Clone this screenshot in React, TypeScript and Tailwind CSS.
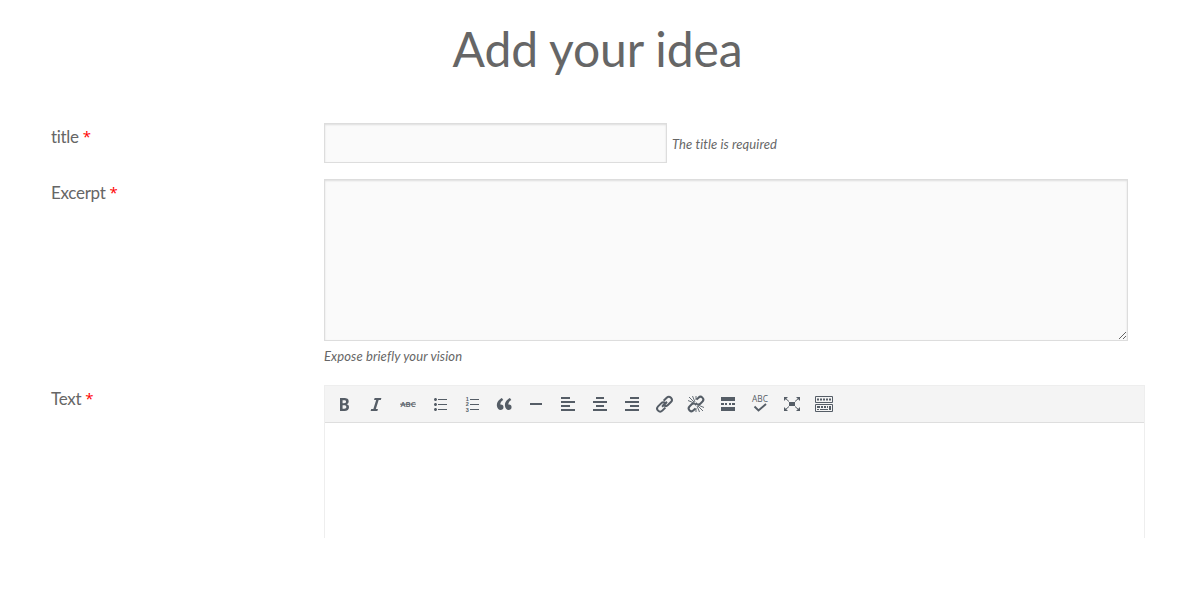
import React from "react";

const paths: Record<string, string> = {
  bold: "M6 4v13h4.54c1.37 0 2.46-.33 3.26-1 .8-.66 1.2-1.58 1.2-2.77 0-.84-.17-1.51-.51-2.01s-.9-.85-1.67-1.03v-.09c.57-.1 1.02-.4 1.36-.9s.51-1.13.51-1.91c0-1.14-.39-1.98-1.17-2.5C12.75 4.26 11.5 4 9.78 4H6zm2.57 5.15V6.26h1.36c.73 0 1.27.11 1.61.32.34.22.51.58.51 1.07 0 .54-.16.92-.47 1.15s-.82.35-1.51.35h-1.5zm0 2.19h1.6c1.44 0 2.16.53 2.16 1.61 0 .6-.17 1.05-.51 1.34s-.86.43-1.57.43H8.57v-3.38z",
  italic: "M14.78 6h-2.13l-2.8 9h2.12l-.62 2H4.6l.62-2h2.14l2.8-9H8.03l.62-2h6.75z",
  ul: "M5.5 7C4.67 7 4 6.33 4 5.5 4 4.68 4.67 4 5.5 4 6.32 4 7 4.68 7 5.5 7 6.33 6.32 7 5.5 7zM8 5h9v1H8V5zm-2.5 7c-.83 0-1.5-.67-1.5-1.5C4 9.68 4.67 9 5.5 9c.82 0 1.5.68 1.5 1.5 0 .83-.68 1.5-1.5 1.5zM8 10h9v1H8v-1zm-2.5 7c-.83 0-1.5-.67-1.5-1.5 0-.82.67-1.5 1.5-1.5.82 0 1.5.68 1.5 1.5 0 .83-.68 1.5-1.5 1.5zM8 15h9v1H8v-1z",
  quote: "M9.49 13.22c0-.74-.2-1.38-.61-1.9-.62-.78-1.83-.88-2.53-.72-.29-1.65 1.11-3.75 2.92-4.65L7.88 4c-2.73 1.3-5.42 4.28-4.96 8.05C3.21 14.43 4.59 16 6.54 16c.85 0 1.56-.25 2.12-.75s.83-1.18.83-2.03zm8.05 0c0-.74-.2-1.38-.61-1.9-.63-.78-1.83-.88-2.53-.72-.29-1.65 1.11-3.75 2.92-4.65L15.93 4c-2.73 1.3-5.41 4.28-4.95 8.05.29 2.38 1.66 3.95 3.61 3.95.85 0 1.56-.25 2.12-.75s.83-1.18.83-2.03z",
  rule: "M4 9h12v2H4z",
  left: "M3 3h9v2H3zM3 7h14v2H3zM3 11h9v2H3zM3 15h14v2H3z",
  center: "M6 3h8v2H6zM3 7h14v2H3zM6 11h8v2H6zM3 15h14v2H3z",
  right: "M8 3h9v2H8zM3 7h14v2H3zM8 11h9v2H8zM3 15h14v2H3z",
  more: "M3 3h14v4H3zM3 9h3v2H3zM7 9h2v2H7zM11 9h2v2h-2zM14 9h3v2h-3zM3 13h14v4H3z",
};

const Svg = ({ children }: { children: React.ReactNode }) => (
  <svg viewBox="0 0 20 20" className="size-5 shrink-0 fill-current">{children}</svg>
);
const P = ({ n }: { n: string }) => <Svg><path d={paths[n]} /></Svg>;

const links = (
  <g transform="translate(.5 .2) rotate(-45 10 10)" fill="none" stroke="currentColor" strokeWidth="2">
    <path d="M8.200 13H3.900a3 3 0 0 1 0-6h4.300a3 3 0 0 1 3 3H6.500" />
    <path d="M11.800 7h4.300a3 3 0 0 1 0 6h-4.300a3 3 0 0 1-3-3h4.700" />
  </g>
);

function Toolbar() {
  return (
    <div className="flex h-[37px] items-center gap-3 border-b border-[#dedede] bg-[#f4f4f4] px-[9px] text-[#555d66]">
      <P n="bold" />
      <P n="italic" />
      <Svg>
        <text x="2.500" y="12.800" textLength="15" lengthAdjust="spacingAndGlyphs" className="font-['Open_Sans',sans-serif] text-[7.5px] font-semibold">ABC</text>
        <path d="M2 9.700h16v.9H2z" />
      </Svg>
      <P n="ul" />
      <Svg>
        <path d="M8 5h9v1H8zM8 10h9v1H8zM8 15h9v1H8z" />
        <g className="font-['Liberation_Sans',sans-serif] text-[5.5px] font-bold">
          <text x="3.800" y="7">1</text><text x="3.800" y="12.300">2</text><text x="3.800" y="17.600">3</text>
        </g>
      </Svg>
      <P n="quote" />
      <P n="rule" />
      <P n="left" />
      <P n="center" />
      <P n="right" />
      <Svg>{links}</Svg>
      <Svg>
        <g fill="none" stroke="currentColor" strokeWidth="2">
          <path d="M10.500 5.500l2-1.800a2.700 2.700 0 0 1 4 3.800l-2.200 2.200c-.8.8-2 .9-3 .4M9.500 14.500l-2 1.800a2.700 2.700 0 0 1-4-3.800l2.200-2.200c.8-.8 2-.9 3-.4M9 11l2-2" />
        </g>
        <path d="M3 3l5.500 5.500M6.500 2l2.500 6M2 6.500l6 2.500M11.500 11.500L17 17M11 12l2.500 6M12 11l6 2.500M10 2v4M10 14v4" stroke="currentColor" strokeWidth=".9" />
      </Svg>
      <P n="more" />
      <Svg>
        <text x="2" y="8" textLength="16" lengthAdjust="spacingAndGlyphs" className="font-['Open_Sans',sans-serif] text-[8.5px] font-medium">ABC</text>
        <path d="M4.500 12.500l4 4 7.500-6.500" fill="none" stroke="currentColor" strokeWidth="1.900" />
      </Svg>
      <Svg>
        <path d="M7 8h6v4H7zM2 3h4L2 7zM14 3h4v4zM2 13v4h4zM18 13v4h-4z" />
        <path d="M3 4l4 3.500M17 4l-4 3.500M3 16l4-3.500M17 16l-4-3.500" stroke="currentColor" />
      </Svg>
      <Svg>
        <path d="M1.500 2.500h17v6h-17zM1.500 10.500h17v7h-17z" fill="none" stroke="currentColor" />
        <path d="M3 4.500h2v2H3zM6 4.500h2v2H6zM9 4.500h2v2H9zM12 4.500h2v2h-2zM15 4.500h2v2h-2zM3 12h3v2H3zM7 12h2v2H7zM10 12h2v2h-2zM13 12h1v2h-1zM15 12h2v4h-2zM3 15h2v1H3zM6 15h8v1H6z" />
      </Svg>
    </div>
  );
}

const Label = ({ text }: { text: string }) => (
  <label className="flex h-7 w-[273px] shrink-0 gap-[4px] pt-[2px] text-[17px] leading-6 tracking-[-0.3px]">
    <span>{text}</span>
    <span className="-mt-px font-['Open_Sans',sans-serif] text-[15px] text-[#ff0000]">*</span>
  </label>
);

export default function App() {
  return (
    <main className="h-[601px] overflow-hidden bg-white pl-[51px] font-['Lato',sans-serif] text-[#666]">
      <h1 className="h-[123px] w-[1093px] pt-[20px] text-center text-[48px] leading-[58px] tracking-[-0.1px]">Add your idea</h1>
      <form>
        <div className="flex h-14">
          <Label text="title" />
          <input aria-label="title" className="h-10 w-[343px] border border-[#ddd] bg-[#fafafa] shadow-[inset_0_1px_2px_#ddd] outline-none" />
          <em className="ml-[5px] pt-[11px] text-[13px] leading-5 tracking-[0.1px]">The title is required</em>
        </div>
        <div className="flex h-[206px]">
          <Label text="Excerpt" />
          <div>
            <textarea aria-label="Excerpt" className="block h-[162px] w-[804px] resize border border-[#ddd] bg-[#fafafa] shadow-[inset_0_1px_2px_#ddd] outline-none" />
            <em className="mt-[5px] block text-[13px] leading-5 tracking-[0.12px]">Expose briefly your vision</em>
          </div>
        </div>
        <div className="flex">
          <Label text="Text" />
          <div className="h-[153px] w-[821px] border border-b-0 border-[#eee]">
            <Toolbar />
          </div>
        </div>
      </form>
    </main>
  );
}
